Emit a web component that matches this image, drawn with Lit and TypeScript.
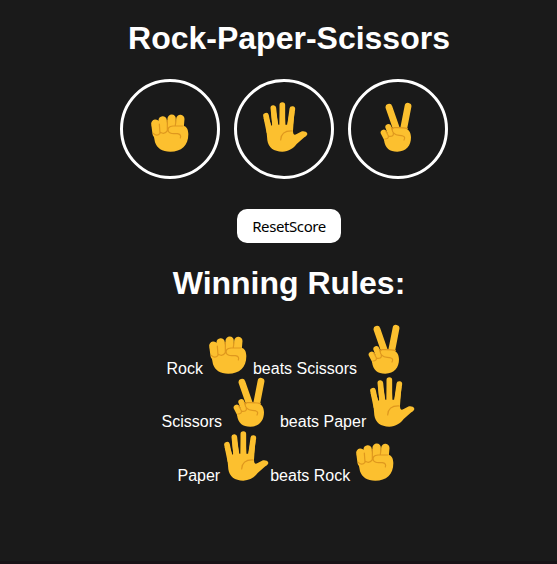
import { LitElement, html, svg, css } from "lit";
import { customElement, property } from "lit/decorators.js";

type Hand = "rock" | "paper" | "scissors";

const shapes = {
  rock: {
    width: 38,
    box: "108 80 114 150",
    art: svg`
      <path class="finger wide" d="M121 145L125 175M143 135L145 170M170 130L169 165M196 131L193 165"/>
      <path class="skin" d="M110 150L120 201C126 219 141 229 166 229C199 229 220 212 220 176C220 160 213 151 203 151L150 150Z"/>
      <path class="line" d="M133 146L135 174Q126 185 115 174M157 135V166Q149 179 136 171M183 135L181 150M160 168Q156 153 174 152H203M159 166Q164 175 176 175H187Q200 177 196 188"/>`,
  },
  paper: {
    width: 46,
    box: "96 80 138 150",
    art: svg`
      <path class="finger" d="M108 121L118 170M130 98L137 165M157 89V165M187 101L178 165"/>
      <path class="skin" d="M108 150L112 195C115 217 131 229 157 229C176 228 191 219 200 206L223 186C229 182 232 179 232 175C230 168 219 167 213 169L200 176C193 181 189 178 189 166L193 110L178 115L172 148H166L164 105H150L149 148H145L137 105L123 106L127 149L124 151L115 125L101 128Z"/>
      <path class="line" d="M152 194C153 176 165 166 187 167"/>`,
  },
  scissors: {
    width: 32,
    box: "105 80 96 150",
    art: svg`
      <path class="finger index" d="M132 96L156 165M189 93L174 170"/>
      <path class="finger curled" d="M116 172L126 191M130 155L141 184"/>
      <path class="skin" d="M117 193C120 218 134 229 157 229C184 229 198 211 198 186C198 171 190 160 178 158L151 156C143 157 140 161 138 168L121 181Z"/>
      <path class="line" d="M122 166L130 181Q132 191 120 191M139 157L145 174Q147 184 132 183M187 160C174 156 160 157 147 157C140 159 140 168 147 174C156 184 164 177 174 182Q182 185 177 194"/>`,
  },
};

@customElement("hand-icon")
export class HandIcon extends LitElement {
  @property() hand: Hand = "rock";

  static styles = css`
    :host { display: block; flex: none; }
    svg { display: block; height: 50px; }
    .skin { fill: #fcc02f; }
    .finger { fill: none; stroke: #fcc02f; stroke-width: 17; stroke-linecap: round; }
    .finger.index { stroke-width: 20.5; }
    .finger.curled { stroke-width: 18; }
    .finger.wide { stroke-width: 25; }
    .line { fill: none; stroke: #df981e; stroke-width: 3.6; stroke-linecap: round; stroke-linejoin: round; }
  `;

  render() {
    const shape = shapes[this.hand];
    return html`<svg width=${shape.width} height="50" viewBox=${shape.box}>${shape.art}</svg>`;
  }
}

@customElement("app-root")
export class AppRoot extends LitElement {
  static styles = css`
    :host {
      display: flex;
      flex-direction: column;
      box-sizing: border-box;
      height: 564px;
      background: #1a1a1a;
      border-bottom: 3px solid #181216;
      color: #fff;
      font: 16px/18px "Liberation Sans", Arial, sans-serif;
      overflow: hidden;
    }
    h1 { margin: 20px 0 0 21px; font-size: 32px; line-height: 36px; text-align: center; white-space: nowrap; }
    .choices { display: flex; gap: 14px; margin: 23px 0 0 120px; }
    .choice {
      box-sizing: border-box;
      width: 100px;
      height: 100px;
      padding: 0 0 5px;
      border: 3px solid #fff;
      border-radius: 50%;
      background: none;
      display: flex;
      align-items: center;
      justify-content: center;
    }
    .choice.paper { padding-left: 2px; }
    .choice.scissors { padding-right: 4px; }
    .reset {
      width: 104px;
      height: 34px;
      margin: 30px 0 0 237px;
      padding: 0;
      border: 0;
      border-radius: 10px;
      background: #fff;
      color: #000;
      font: 15px/34px "Noto Sans", sans-serif;
      letter-spacing: -0.4px;
    }
    .title { margin-top: 22px; }
    .rules { margin-top: 19px; }
    .rule { display: flex; align-items: flex-end; height: 54px; white-space: nowrap; }
    .rule.first { padding-left: 166.5px; }
    .rule.second { padding-left: 161.5px; height: 53px; }
    .rule.third { padding-left: 177.5px; }
    .word { margin-bottom: -4px; }
    .first .loser { margin-left: 6.5px; }
    .first .beats { margin-left: 5.5px; }
    .first .last { margin-left: 10.5px; }
    .second .loser { margin-left: 11px; }
    .second .beats { margin-left: 15px; }
    .second .last { margin-left: 2.5px; }
    .third .loser { margin-left: 3px; }
    .third .beats { margin-left: 1px; }
    .third .last { margin-left: 5.5px; }
  `;

  private rule(place: string, winner: string, a: Hand, loser: string, b: Hand) {
    return html`<div class="rule ${place}">
      <span class="word">${winner}</span><hand-icon class="loser" .hand=${a}></hand-icon>
      <span class="word beats">beats ${loser}</span><hand-icon class="last" .hand=${b}></hand-icon>
    </div>`;
  }

  render() {
    const hands: Hand[] = ["rock", "paper", "scissors"];
    return html`
      <h1>Rock-Paper-Scissors</h1>
      <div class="choices">
        ${hands.map((h) => html`<button class="choice ${h}" aria-label=${h}><hand-icon .hand=${h}></hand-icon></button>`)}
      </div>
      <button class="reset">ResetScore</button>
      <h1 class="title">Winning Rules:</h1>
      <div class="rules">
        ${this.rule("first", "Rock", "rock", "Scissors", "scissors")}
        ${this.rule("second", "Scissors", "scissors", "Paper", "paper")}
        ${this.rule("third", "Paper", "paper", "Rock", "rock")}
      </div>
    `;
  }
}
